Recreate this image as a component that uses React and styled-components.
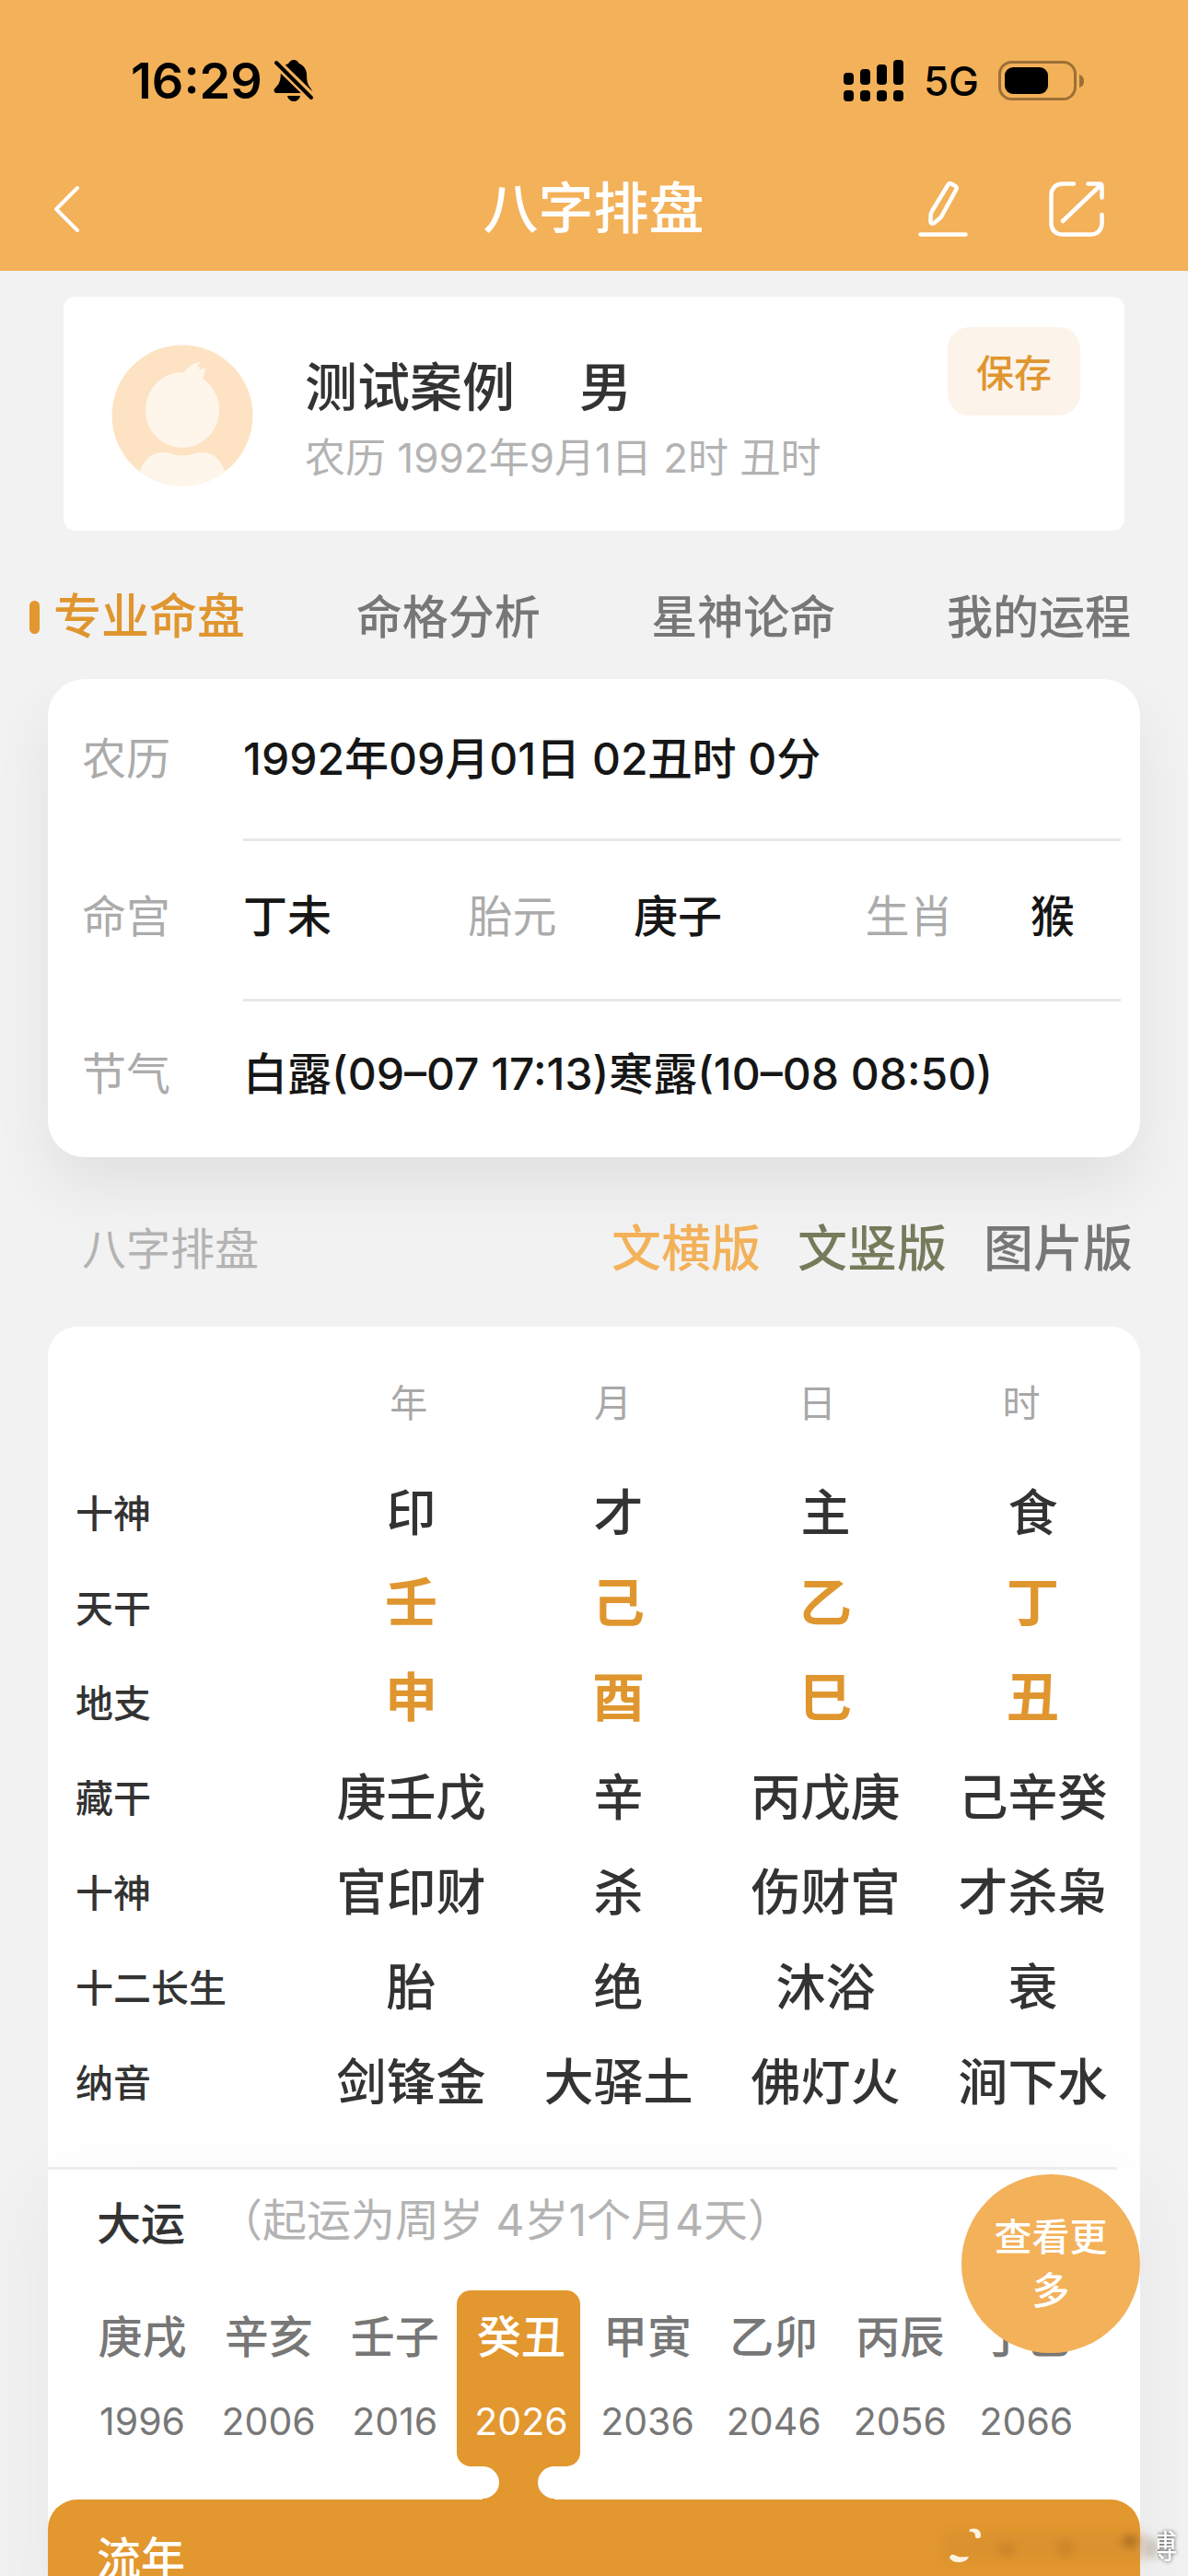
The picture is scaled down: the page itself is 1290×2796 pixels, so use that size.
import React, { useState } from 'react';
import styled, { createGlobalStyle, css } from 'styled-components';

const GlobalStyle = createGlobalStyle`
  * {
    box-sizing: border-box;
  }

  body {
    margin: 0;
    background: #f2f2f2;
    color: #333;
    font-family: Inter, "Noto Sans CJK SC", sans-serif;
    -webkit-font-smoothing: antialiased;
  }

  button {
    margin: 0;
    padding: 0;
    border: 0;
    background: none;
    font: inherit;
    color: inherit;
    cursor: pointer;
  }

  h1, h2, p, dl, dd, ul {
    margin: 0;
    padding: 0;
  }

  svg {
    display: block;
  }
`;

const Page = styled.div`
  height: 100vh;
  overflow: hidden;
`;

/* 顶部 */
const Header = styled.header`
  background: #f3b159;
`;

const StatusBar = styled.div`
  display: flex;
  justify-content: space-between;
  align-items: center;
  height: 159px;
  padding: 17px 112px 0 142px;
  color: #000;
`;

const StatusGroup = styled.div`
  display: flex;
  align-items: center;
  gap: ${({ $gap }) => $gap}px;
`;

const Clock = styled.time`
  font-size: 54px;
  font-weight: 600;
  line-height: 64px;
`;

const Network = styled.span`
  font-size: 44px;
  font-weight: 500;
  line-height: 56px;
`;

const NavBar = styled.nav`
  display: grid;
  grid-template-columns: 1fr auto 1fr;
  align-items: center;
  height: 135px;
  padding: 0 91px 0 58px;
  color: #fff;
`;

const NavTitle = styled.h1`
  font-size: 60px;
  font-weight: 500;
  line-height: 84px;
  padding: 0 0 2px 32px;
`;

const NavActions = styled.div`
  display: flex;
  justify-content: flex-end;
  gap: 88px;
`;

const IconButton = styled.button`
  justify-self: start;
`;

/* 用户卡片 */
const ProfileCard = styled.section`
  display: flex;
  align-items: center;
  height: 254px;
  margin: 28px 69px 0;
  padding: 4px 48px 0 52px;
  border-radius: 13px;
  background: #fff;
`;

const ProfileInfo = styled.div`
  flex: 1;
  margin-left: 56px;
  padding-top: 8px;
`;

const ProfileName = styled.h2`
  display: flex;
  gap: 70px;
  font-size: 57px;
  font-weight: 500;
  line-height: 84px;
`;

const ProfileDate = styled.p`
  color: #b3b3b3;
  font-size: 44px;
  line-height: 68px;
`;

const SaveButton = styled.button`
  align-self: flex-start;
  width: 144px;
  height: 96px;
  margin-top: 29px;
  padding-bottom: 2px;
  border-radius: 24px;
  background: #fcf3ea;
  color: #e0962f;
  font-size: 41px;
  font-weight: 500;
`;

/* 标签 */
const Tabs = styled.div`
  display: flex;
  justify-content: space-between;
  align-items: center;
  height: 161px;
  padding: 26px 62px 0 32px;
`;

const Tab = styled.button`
  display: flex;
  align-items: center;
  gap: 15px;
  color: ${({ $active }) => ($active ? '#e0962f' : '#777')};
  font-size: ${({ $active }) => ($active ? 52 : 50)}px;
  font-weight: 500;
  line-height: 72px;

  ${({ $active }) => $active && css`
    &::before {
      content: '';
      width: 11px;
      height: 36px;
      border-radius: 6px;
      background: #e2972f;
    }
  `}
`;

/* 基本信息 */
const InfoCard = styled.dl`
  margin: 0 52px;
  padding: 0 21px 0 37px;
  border-radius: 40px;
  background: #fff;
  box-shadow: 0 32px 64px rgba(0, 0, 0, 0.07);
  clip-path: inset(0 -52px -140px -52px);
`;

const InfoRow = styled.div`
  display: flex;
  height: 174px;
  font-size: 48px;
  line-height: 72px;

  > * {
    padding-bottom: 8px;
    border-bottom: 3px solid transparent;
  }

  &:first-child {
    height: 176px;
  }

  &:first-child > * {
    padding-bottom: 0;
  }

  &:last-child {
    height: 169px;
  }

  &:not(:last-child) > dd {
    border-bottom-color: #e8e8e8;
  }
`;

const InfoLabel = styled.dt`
  display: flex;
  align-items: center;
  flex: 0 0 175px;
  color: #ababab;
`;

const InfoValue = styled.dd`
  display: flex;
  align-items: center;
  flex: 1;
  color: #161616;
  font-weight: 500;
`;

const InfoGrid = styled.div`
  display: grid;
  grid-template-columns: 244fr 179fr 251fr 179fr 98fr;
  width: 100%;
`;

const Muted = styled.span`
  color: #ababab;
  font-weight: 400;
`;

/* 八字排盘 */
const SectionBar = styled.div`
  display: flex;
  justify-content: space-between;
  align-items: center;
  height: 184px;
  padding: 16px 60px 0 89px;
`;

const SectionTitle = styled.h2`
  color: #b3b3b3;
  font-size: 48px;
  font-weight: 400;
  line-height: 72px;
`;

const VersionList = styled.div`
  display: flex;
  gap: 40px;
`;

const VersionButton = styled.button`
  color: ${({ $color }) => $color};
  font-size: 54px;
  font-weight: 500;
  line-height: 72px;
`;

const ChartCard = styled.section`
  margin: 0 52px;
  padding-bottom: 40px;
  border-radius: 32px 32px 0 0;
  background: #fff;
`;

const ChartTable = styled.table`
  display: block;
  width: 100%;

  thead,
  tbody {
    display: block;
  }

  th,
  td {
    padding: 0;
  }
`;

const HeadRow = styled.tr`
  display: grid;
  grid-template-columns: 281fr repeat(4, 222fr);
  align-items: center;
  height: 151px;
  padding: 8px 18px 0 0;
  color: #a8a8a8;
  font-size: 41px;

  th {
    font-weight: 400;
  }
`;

const BodyRow = styled.tr`
  display: grid;
  grid-template-columns: 282fr repeat(4, 225fr);
  align-items: center;
  height: 103px;
  padding-right: 4px;
`;

const RowName = styled.th`
  && {
    padding-left: 30px;
  }
  font-size: 41px;
  font-weight: 500;
  line-height: 60px;
  text-align: left;
`;

const Cell = styled.td`
  font-size: 54px;
  font-weight: 500;
  line-height: 72px;
  text-align: center;
  white-space: nowrap;

  ${({ $accent }) => $accent && css`
    && {
      padding-bottom: 12px;
    }
    color: #e0962f;
    font-size: 57px;
    font-weight: 600;
  `}
`;

/* 大运 */
const LuckPanel = styled.section`
  margin: 0 52px;
  background: #fff;
  box-shadow: 0 20px 80px rgba(0, 0, 0, 0.05);
`;

const LuckDivider = styled.hr`
  height: 3px;
  margin: 0 25px 0 0;
  border: 0;
  background: #ededed;
`;

const LuckHeading = styled.div`
  display: flex;
  gap: 36px;
  padding: 19px 53px 0;
  font-size: 48px;
  line-height: 72px;
`;

const LuckTitle = styled.h2`
  padding-top: 4px;
  font-size: 48px;
  font-weight: 500;
  line-height: 72px;
`;

const LuckNote = styled.p`
  color: #b3b3b3;
`;

const LuckList = styled.ul`
  display: grid;
  grid-template-columns: repeat(8, 1fr);
  margin-top: 36px;
  padding: 0 56px 0 33px;
  list-style: none;
`;

const LuckItem = styled.li`
  display: flex;
  flex-direction: column;
  align-items: center;
  min-height: 226px;
  padding-right: 4px;
`;

const LuckButton = styled.button`
  display: flex;
  flex-direction: column;
  align-items: center;
  gap: 19px;
  width: 100%;
  height: 191px;
  padding-left: 6px;
  border-radius: 15px;
  background: ${({ $active }) => ($active ? '#e2972f' : 'transparent')};
  color: ${({ $active }) => ($active ? '#fff' : '#777')};

  && {
    padding-top: 15px;
  }
`;

const LuckName = styled.span`
  font-size: 48px;
  font-weight: 500;
  line-height: 72px;
`;

const LuckYear = styled.span`
  padding-top: 8px;
  font-size: 41px;
  font-weight: 400;
  line-height: 56px;
`;

const YearPanel = styled.div`
  padding: 24px 53px;
  border-radius: 32px 32px 0 0;
  background: #e2972f;
  color: #fff;
`;

const MoreButton = styled.button`
  && {
    position: fixed;
    right: 52px;
    bottom: 242px;
    width: 194px;
    height: 194px;
    padding: 0 34px;
    border-radius: 50%;
    background: #f3b15a;
    color: #fff;
    font-size: 41px;
    font-weight: 500;
    line-height: 58px;
  }
`;

const Watermark = styled.div`
  position: fixed;
  right: 12px;
  bottom: 4px;
  display: flex;
  align-items: center;
  color: #fff;
  font-size: 35px;
  line-height: 52px;
  text-shadow: 0 0 4px rgba(0, 0, 0, 0.7);
`;

const WatermarkText = styled.span`
  margin-left: -22px;
  clip-path: inset(0 -6px 0 14px);
`;

const BellOffIcon = () => (
  <svg width="44" height="48" viewBox="0 0 44 48" aria-hidden="true">
    <path
      d="M22 1c2.500 0 5 1.700 5.800 4 5.200 2 8 6.500 8.200 12 .2 7 .6 10.500 4.500 15 1.400 1.600 1.500 5-.7 5H3.500C.6 37-.3 33.800 1.400 32c4-4 6-7 6.300-14C8 11.500 10.500 7 16.200 5 17 2.700 19.500 1 22 1z"
      fill="#000"
    />
    <path d="M15 40h14c-1 4-4 6-7 6s-6-2-7-6z" fill="#000" />
    <path d="M3 4l39 38" stroke="#f3b159" strokeWidth="10" />
    <path d="M3 4l38 38" stroke="#000" strokeWidth="4" strokeLinecap="round" />
  </svg>
);

const SignalIcon = () => (
  <svg width="66" height="46" viewBox="0 0 66 46" aria-hidden="true">
    <rect x="0" y="14" width="11" height="13" rx="4" />
    <rect x="18" y="10" width="11" height="17" rx="4" />
    <rect x="36" y="5" width="11" height="22" rx="4" />
    <rect x="54" y="0" width="11" height="27" rx="4" />
    <rect x="0" y="33" width="11" height="12" rx="4" />
    <rect x="18" y="33" width="11" height="12" rx="4" />
    <rect x="36" y="33" width="11" height="12" rx="4" />
    <rect x="54" y="33" width="11" height="12" rx="4" />
  </svg>
);

const BatteryIcon = () => (
  <svg width="94" height="44" viewBox="0 0 94 44" aria-hidden="true">
    <rect x="1.500" y="1.500" width="82" height="40" rx="13" fill="none" stroke="#9b7036" strokeWidth="3" />
    <rect x="7" y="7" width="47" height="29" rx="9" />
    <path d="M88 15c3 1 5 3 5 7s-2 6-5 7z" fill="#9b7036" />
  </svg>
);

const BackIcon = () => (
  <svg width="28" height="50" viewBox="0 0 28 50" fill="none" aria-hidden="true">
    <path d="M26 2L3 25l23 23" stroke="#fff" strokeWidth="4" strokeLinecap="round" strokeLinejoin="round" />
  </svg>
);

const EditIcon = () => (
  <svg width="54" height="60" viewBox="0 0 54 60" fill="none" stroke="#fff" strokeWidth="4.500" strokeLinecap="round" strokeLinejoin="round" aria-hidden="true">
    <path d="M32.500 3.500c1-1.600 2.500-1.600 4-.8l3.500 2c1.700 1 2.200 2.300 1.300 4L25.500 37.500c-.6 1-1.200 1.800-2.100 2.500l-6 5c-2 1.500-4 .6-4-1.800l.4-7.200c.1-1.400.4-2.400 1-3.500z" />
    <path d="M2.500 57.500h49" />
  </svg>
);

const ShareIcon = () => (
  <svg width="60" height="60" viewBox="0 0 60 60" fill="none" stroke="#fff" strokeWidth="4.500" strokeLinecap="round" strokeLinejoin="round" aria-hidden="true">
    <path d="M27 2.500H14.500c-7 0-12 5-12 12v31c0 7 5 12 12 12h31c7 0 12-5 12-12V36" />
    <path d="M15 43L56 4" />
    <path d="M42.500 2.500H55c1.500 0 2.500 1 2.500 2.500v12.500" />
  </svg>
);

const Avatar = () => (
  <svg width="154" height="154" viewBox="0 0 154 154" aria-hidden="true">
    <defs>
      <clipPath id="avatar">
        <circle cx="77" cy="77" r="76.500" />
      </clipPath>
    </defs>
    <g clipPath="url(#avatar)">
      <rect width="154" height="154" fill="#fde3c3" />
      <g fill="#fef6eb">
        <ellipse cx="77" cy="71" rx="40" ry="41" />
        <path d="M78 33c3-8 10-13 18.500-14-1 1.500-3 3.500-3.500 6 1.500-.8 2.500-1.200 4-1-1 1.200-2 2-2 3.500 2-1 4.500-2.500 7.500-2-1 4-2 8-4.500 14z" />
        <path d="M28 160c-1-22 8-43 28-43 8 0 10 3.500 21 3.500s13-3.500 21-3.500c20 0 29 21 28 43z" />
      </g>
    </g>
  </svg>
);

const Connector = () => (
  <svg width="78" height="36" viewBox="0 0 78 36" aria-hidden="true">
    <path d="M0 0h78a18 17.500 0 0 0 0 35v1H0v-1a18 17.500 0 0 0 0-35z" fill="#e2972f" />
  </svg>
);

const WatermarkSmear = () => (
  <svg width="250" height="56" viewBox="0 0 250 56" aria-hidden="true">
    <defs>
      <filter id="smear" x="-20%" y="-50%" width="140%" height="200%">
        <feGaussianBlur stdDeviation="5" />
      </filter>
    </defs>
    <g filter="url(#smear)">
      <rect x="10" y="14" width="222" height="28" fill="#c98428" opacity="0.3" />
      <ellipse cx="78" cy="32" rx="9" ry="9" fill="#a86c1e" opacity="0.3" />
      <ellipse cx="142" cy="30" rx="8" ry="11" fill="#a86c1e" opacity="0.3" />
      <ellipse cx="212" cy="22" rx="9" ry="7" fill="#8f5c18" opacity="0.6" />
      <ellipse cx="236" cy="30" rx="8" ry="11" fill="#c9c4bd" />
    </g>
    <path d="M39 9c6-2 12 1 11 8-1 3-6 3-6 0 0-4-2-5-5-5-2 0-2-3 0-3z" fill="#fdf3e2" />
    <path d="M16 40c2-5 5-3 9-1 4 1 8 0 12 0-2 7-17 9-21 1z" fill="#fdf3e2" />
  </svg>
);

const TABS = ['专业命盘', '命格分析', '星神论命', '我的运程'];

const VERSIONS = [
  { name: '文横版', color: '#f3b159' },
  { name: '文竖版', color: '#777b5c' },
  { name: '图片版', color: '#777' },
];

const PILLARS = ['年', '月', '日', '时'];

const CHART_ROWS = [
  { name: '十神', values: ['印', '才', '主', '食'] },
  { name: '天干', values: ['壬', '己', '乙', '丁'], accent: true },
  { name: '地支', values: ['申', '酉', '巳', '丑'], accent: true },
  { name: '藏干', values: ['庚壬戊', '辛', '丙戊庚', '己辛癸'] },
  { name: '十神', values: ['官印财', '杀', '伤财官', '才杀枭'] },
  { name: '十二长生', values: ['胎', '绝', '沐浴', '衰'] },
  { name: '纳音', values: ['剑锋金', '大驿土', '佛灯火', '涧下水'] },
];

const LUCKS = [
  { name: '庚戌', year: 1996 },
  { name: '辛亥', year: 2006 },
  { name: '壬子', year: 2016 },
  { name: '癸丑', year: 2026 },
  { name: '甲寅', year: 2036 },
  { name: '乙卯', year: 2046 },
  { name: '丙辰', year: 2056 },
  { name: '丁巳', year: 2066 },
];

const App = () => {
  const [tab, setTab] = useState(0);
  const [luck, setLuck] = useState(3);

  return (
    <Page>
      <GlobalStyle />
      <Header>
        <StatusBar>
          <StatusGroup $gap={12}>
            <Clock>16:29</Clock>
            <BellOffIcon />
          </StatusGroup>
          <StatusGroup $gap={21}>
            <SignalIcon />
            <Network>5G</Network>
            <BatteryIcon />
          </StatusGroup>
        </StatusBar>
        <NavBar>
          <IconButton aria-label="返回">
            <BackIcon />
          </IconButton>
          <NavTitle>八字排盘</NavTitle>
          <NavActions>
            <IconButton aria-label="编辑">
              <EditIcon />
            </IconButton>
            <IconButton aria-label="分享">
              <ShareIcon />
            </IconButton>
          </NavActions>
        </NavBar>
      </Header>

      <main>
        <ProfileCard>
          <Avatar />
          <ProfileInfo>
            <ProfileName>
              <span>测试案例</span>
              <span>男</span>
            </ProfileName>
            <ProfileDate>农历 1992年9月1日 2时 丑时</ProfileDate>
          </ProfileInfo>
          <SaveButton>保存</SaveButton>
        </ProfileCard>

        <Tabs role="tablist">
          {TABS.map((name, index) => (
            <Tab
              key={name}
              role="tab"
              aria-selected={tab === index}
              $active={tab === index}
              onClick={() => setTab(index)}
            >
              {name}
            </Tab>
          ))}
        </Tabs>

        <InfoCard>
          <InfoRow>
            <InfoLabel>农历</InfoLabel>
            <InfoValue>1992年09月01日 02丑时 0分</InfoValue>
          </InfoRow>
          <InfoRow>
            <InfoLabel>命宫</InfoLabel>
            <InfoValue>
              <InfoGrid>
                <span>丁未</span>
                <Muted>胎元</Muted>
                <span>庚子</span>
                <Muted>生肖</Muted>
                <span>猴</span>
              </InfoGrid>
            </InfoValue>
          </InfoRow>
          <InfoRow>
            <InfoLabel>节气</InfoLabel>
            <InfoValue>白露(09–07 17:13)寒露(10–08 08:50)</InfoValue>
          </InfoRow>
        </InfoCard>

        <SectionBar>
          <SectionTitle>八字排盘</SectionTitle>
          <VersionList>
            {VERSIONS.map(({ name, color }) => (
              <VersionButton key={name} $color={color}>{name}</VersionButton>
            ))}
          </VersionList>
        </SectionBar>

        <ChartCard>
          <ChartTable>
            <thead>
              <HeadRow>
                <th aria-hidden="true" />
                {PILLARS.map((name) => (
                  <th key={name} scope="col">{name}</th>
                ))}
              </HeadRow>
            </thead>
            <tbody>
              {CHART_ROWS.map(({ name, values, accent }, index) => (
                <BodyRow key={index}>
                  <RowName scope="row">{name}</RowName>
                  {values.map((value, column) => (
                    <Cell key={PILLARS[column]} $accent={accent}>{value}</Cell>
                  ))}
                </BodyRow>
              ))}
            </tbody>
          </ChartTable>
        </ChartCard>

        <LuckPanel>
          <LuckDivider />
          <LuckHeading>
            <LuckTitle>大运</LuckTitle>
            <LuckNote>（起运为周岁 4岁1个月4天）</LuckNote>
          </LuckHeading>
          <LuckList>
            {LUCKS.map(({ name, year }, index) => (
              <LuckItem key={year}>
                <LuckButton $active={luck === index} onClick={() => setLuck(index)}>
                  <LuckName>{name}</LuckName>
                  <LuckYear>{year}</LuckYear>
                </LuckButton>
                {luck === index && <Connector />}
              </LuckItem>
            ))}
          </LuckList>
          <YearPanel>
            <LuckTitle>流年</LuckTitle>
          </YearPanel>
        </LuckPanel>
      </main>

      <MoreButton>查看更多</MoreButton>
      <Watermark>
        <WatermarkSmear />
        <WatermarkText>博</WatermarkText>
      </Watermark>
    </Page>
  );
};

export default App;
